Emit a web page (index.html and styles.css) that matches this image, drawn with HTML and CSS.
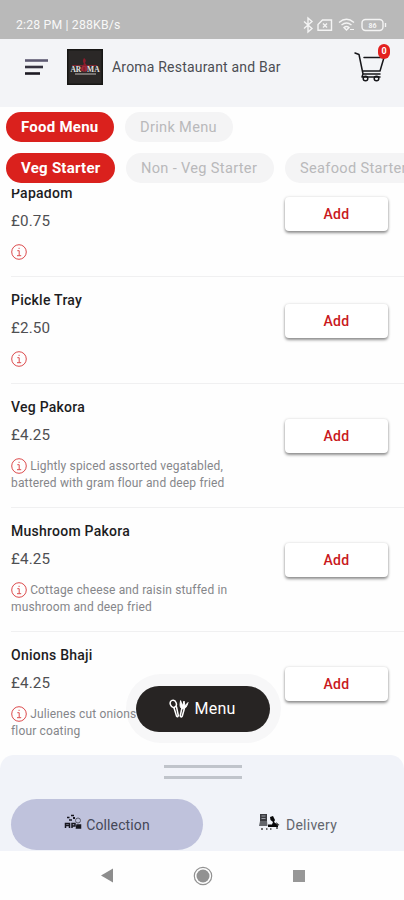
FILE: index.html
```html
<!DOCTYPE html>
<html lang="en">
<head>
<meta charset="utf-8">
<title>Aroma Restaurant and Bar</title>
<link rel="stylesheet" href="styles.css">
</head>
<body>
<svg class="defs" aria-hidden="true">
  <symbol id="info" viewBox="0 0 16 16"><circle cx="8" cy="8" r="7.3" fill="none" stroke="#dc4a4c" stroke-width="1"/><path d="M6.3 6.7H8.2V11.5M6 11.7H10.2M7.5 4.3H8.7" fill="none" stroke="#dc4a4c" stroke-width="1"/></symbol>
</svg>
<div class="app">
  <div class="status">
    <span>2:28 PM | 288KB/s</span>
    <svg class="status-icons" width="86" height="18" viewBox="0 0 86 18" fill="none" stroke="#f4f4f4" stroke-width="1.4">
      <path d="M2 5.5L10 12.5L6 16V2L10 5.5L2 12.5"/>
      <path d="M20.5 4H29.500V14.300H16V8.500Z"/><path d="M21 7.500L25 11.500M25 7.500L21 11.500"/>
      <path d="M37 6.500Q44.500 0 52 6.500M39.500 9Q44.500 5 49.500 9M42 11.500Q44.500 9.500 47 11.500L44.500 14Z"/><path d="M48 13.500H52" stroke-width="1"/>
      <rect x="60" y="3.500" width="21" height="11" rx="3.500"/><path d="M83.500 7V11"/>
      <text x="66.500" y="11.800" class="battery">86</text>
    </svg>
  </div>
  <header class="header">
    <svg class="burger" width="24" height="18" viewBox="0 0 24 18" stroke-width="2.600"><path d="M1 2.500H24" stroke="#5d5a72"/><path d="M1 9H19" stroke="#35323f"/><path d="M1 15.500H16" stroke="#1c1a22"/></svg>
    <svg class="logo" width="36" height="36" viewBox="0 0 36 36"><rect width="36" height="36" fill="#171615"/><rect x="1.500" y="1.500" width="33" height="33" fill="#2b2827"/><path d="M17 9Q20 11 18 14Q22 18 20 22H14Q13 18 17 15Q15 12 17 9Z" fill="#8c1c2b"/><path d="M5 16.500H16M20 16.500H30" stroke="#7d2530" stroke-width="1"/><text x="18" y="22.500" text-anchor="middle" class="logo-name">AR<tspan fill="#a43442">O</tspan>MA</text><path d="M8 25H29" stroke="#a8a3a2" stroke-width="1.200"/></svg>
    <h1>Aroma Restaurant and Bar</h1>
    <div class="cart">
      <svg width="32" height="32" viewBox="0 0 32 32" fill="none" stroke="#16161a" stroke-width="1.500" stroke-linecap="round" stroke-linejoin="round"><path d="M1 2L5 3.500L9 23H26M10 6.500H30L26 20H8.500M9 23L8 26H26"/><circle cx="11.500" cy="27.500" r="2.300"/><circle cx="22.500" cy="27.500" r="2.300"/></svg>
      <span class="badge">0</span>
    </div>
  </header>
  <nav class="tabs">
    <div class="tab-row"><span class="pill on food">Food Menu</span><span class="pill drink">Drink Menu</span></div>
    <div class="tab-row"><span class="pill on veg">Veg Starter</span><span class="pill nonveg">Non - Veg Starter</span><span class="pill seafood">Seafood Starter</span></div>
  </nav>
  <main class="list">
    <article class="item first"><div class="text"><h2>Papadom</h2><p class="price">£0.75</p><p class="desc"><svg class="info"><use href="#info"/></svg></p></div><button>Add</button></article>
    <article class="item"><div class="text"><h2>Pickle Tray</h2><p class="price">£2.50</p><p class="desc"><svg class="info"><use href="#info"/></svg></p></div><button>Add</button></article>
    <article class="item tall"><div class="text"><h2>Veg Pakora</h2><p class="price">£4.25</p><p class="desc"><svg class="info"><use href="#info"/></svg> Lightly spiced assorted vegatabled,<br>battered with gram flour and deep fried</p></div><button>Add</button></article>
    <article class="item tall"><div class="text"><h2>Mushroom Pakora</h2><p class="price">£4.25</p><p class="desc"><svg class="info"><use href="#info"/></svg> Cottage cheese and raisin stuffed in<br>mushroom and deep fried</p></div><button>Add</button></article>
    <article class="item tall"><div class="text"><h2>Onions Bhaji</h2><p class="price">£4.25</p><p class="desc"><svg class="info"><use href="#info"/></svg> Julienes cut onions<br>flour coating</p></div><button>Add</button></article>
    <div class="halo"><div class="menu">
      <svg width="20" height="20" viewBox="0 0 20 20" fill="none" stroke="#fff" stroke-width="1.500" stroke-linecap="round" stroke-linejoin="round"><ellipse cx="4.300" cy="4.800" rx="3" ry="3.600" transform="rotate(-20 4.300 4.800)"/><path d="M5 8.700L7.500 17Q8.700 18.800 9.300 16.500L7.500 7.800"/><path d="M12.800 9.500L11.200 17Q12 18.800 13.300 17L15.200 10.300"/><path d="M11.500 2Q10 8.500 13 9.700Q17 11 19 3.500L16 6.800L15 2L13.500 6.500Z" fill="#fff" stroke-width="1"/></svg>
      <span>Menu</span></div></div>
  </main>
  <section class="sheet">
    <div class="grip"></div>
    <div class="modes">
      <div class="mode active">
        <svg width="18" height="16" viewBox="0 0 18 16" fill="none" stroke="#17171f" stroke-width="1.500"><path d="M3 3.500H5.500M7 1.500H10M1.500 14V9.500H5.500V14M1.500 11.500H5.500M5 6H8"/><path d="M8 14V9.500H11V12H8"/><circle cx="14" cy="6.500" r="2.500" stroke-width="1" stroke="#5a5b6b"/><path d="M13 11H16.500V14H12.500Z" fill="#17171f"/><path d="M9 4H11" stroke-width="2"/></svg>
        <span>Collection</span>
      </div>
      <div class="mode">
        <svg width="21" height="17" viewBox="0 0 21 17"><path d="M1 0H8V7H1Z" fill="#3b3b40"/><path d="M2.500 2H6.500M2.500 4.500H6.500" stroke="#999da5"/><path d="M1 7H8L8.500 12H0Z" fill="#65676d"/><path d="M11 3L14 2L16 6L15 8L19 11V13H9V10.500H13L14 8L11.500 6Z" fill="#08080a"/><path d="M17 8L20.500 11L18 12Z" fill="#333"/><path d="M2 15H4M7 15H8.500M11 15H12.500M17 14H19" stroke="#444" stroke-width="1.500"/></svg>
        <span class="delivery">Delivery</span>
      </div>
    </div>
  </section>
  <footer class="system">
    <svg width="14" height="16" viewBox="0 0 14 16"><path d="M1 7.500L13 0.500V14.500Z" fill="#8d8d8d"/></svg>
    <svg width="20" height="20" viewBox="0 0 20 20"><circle cx="10" cy="10" r="8.700" fill="none" stroke="#929292" stroke-width="1.200"/><circle cx="10" cy="10" r="6.500" fill="#929292"/></svg>
    <svg width="14" height="14" viewBox="0 0 14 14"><rect x="1" y="1" width="12" height="12" fill="#979797"/></svg>
  </footer>
</div>
</body>
</html>
```

FILE: styles.css
```css
* { box-sizing: border-box; }
body { margin: 0; font-family: Roboto, "Liberation Sans", sans-serif; background: #fff; }
h1, h2, p { margin: 0; }
.defs { display: none; }
svg { flex: none; }
.app { width: 404px; height: 900px; display: flex; flex-direction: column; overflow: hidden; background: #fefefe; }

.status { flex: none; height: 39px; padding: 10px 16px 0 16px; background: #b9b9b9; display: flex; justify-content: space-between; align-items: flex-start; color: #f8f8f8; font-size: 12.3px; line-height: 30px; }
.status span { letter-spacing: 0.15px; white-space: nowrap; }
.status-icons { margin-top: 6px; }
.battery { font-size: 7px; font-weight: 700; fill: #f4f4f4; stroke: none; }

.header { flex: none; height: 68px; padding: 10px 14px 0 24px; background: #f3f4f7; display: flex; align-items: flex-start; }
.burger { margin-top: 9px; }
.logo { margin-left: 19px; }
.logo-name { font: 700 7.5px "Liberation Serif", serif; fill: #e6e3e2; }
h1 { margin-left: 9px; font-size: 14px; line-height: 36px; font-weight: 400; color: #4b4d53; letter-spacing: 0.2px; white-space: nowrap; }
.cart { position: relative; margin-left: auto; width: 36px; height: 36px; padding-top: 2px; }
.badge { position: absolute; left: 24px; top: -5px; width: 12px; height: 15px; border-radius: 6px; background: #e3211f; color: #fff; font-size: 9px; font-weight: 700; line-height: 15px; text-align: center; }

.tabs { flex: none; height: 82px; padding: 5px 0 0 6px; display: flex; flex-direction: column; gap: 11px; }
.tab-row { display: flex; gap: 11px; }
.pill { flex: none; height: 30px; padding-left: 15px; border-radius: 15px; background: #f4f4f5; color: #b9b9bb; font-size: 14.6px; line-height: 30px; letter-spacing: 0.32px; white-space: nowrap; }
.pill.on { background: #da211d; color: #fff; font-weight: 700; font-size: 15px; letter-spacing: 0.25px; }
.food { width: 108px; }
.drink { width: 108px; }
.veg { width: 109px; }
.nonveg { width: 148px; }
.seafood { width: 138px; }

.list { position: relative; z-index: 0; flex: 1; min-height: 0; overflow: hidden; padding-left: 11px; }
.item { height: 107px; padding: 13px 16px 0 0; border-bottom: 1px solid #f0f0f1; display: flex; justify-content: space-between; align-items: flex-start; }
.item.first { margin-top: -19px; }
.item.tall { height: 124.2px; }
h2 { font-size: 14px; line-height: 20px; font-weight: 500; color: #1d1d1f; letter-spacing: 0.25px; }
.price { margin-top: 8px; font-size: 15.2px; line-height: 20px; color: #4f4f52; letter-spacing: 0.15px; }
.desc { margin-top: 12.500px; font-size: 12px; line-height: 17.5px; color: #85868a; letter-spacing: 0.15px; white-space: nowrap; }
.info { width: 16px; height: 16px; vertical-align: -4px; }
.item button { width: 103px; height: 34px; margin-top: 14px; padding: 0; border: 0; border-radius: 4px; background: #fff; box-shadow: 0 2px 3px rgba(0,0,0,.42), 0 0 3px rgba(0,0,0,.13); color: #c9191d; font: 500 14px Roboto, sans-serif; letter-spacing: 0.3px; }
.item.tall button { margin-top: 22px; }

.halo { position: absolute; z-index: -1; left: 126px; top: 485px; width: 155px; height: 69px; padding: 12px 11px 11px 10px; border-radius: 35px; background: #f7f7f8; }
.menu { height: 46px; border-radius: 23px; background: #272423; color: #fff; display: flex; align-items: center; justify-content: center; gap: 6px; font-size: 16px; line-height: 45px; letter-spacing: 0.2px; padding-right: 2px; }
.menu span { margin-top: -1px; }

.sheet { flex: none; height: 96px; background: #f1f3f9; border-radius: 14px 14px 0 0; padding: 10px 11px 0; }
.grip { width: 78px; height: 14px; margin: 0 auto; border-top: 3px solid #c0c4cb; border-bottom: 3px solid #c0c4cb; position: relative; left: 1px; }
.modes { display: grid; grid-template-columns: 192px 190px; margin-top: 20px; }
.mode { height: 51px; border-radius: 26px; display: flex; align-items: center; justify-content: center; gap: 4px; color: #63666e; font-size: 14px; letter-spacing: 0.12px; }
.mode svg { margin-bottom: 5px; }
.mode.active { background: #bfc2dc; color: #454757; }
.delivery { margin-left: 2px; letter-spacing: 0.25px; }

.system { flex: none; height: 49px; padding-left: 1px; display: flex; justify-content: center; align-items: center; gap: 79px; background: #fefefe; }
```
